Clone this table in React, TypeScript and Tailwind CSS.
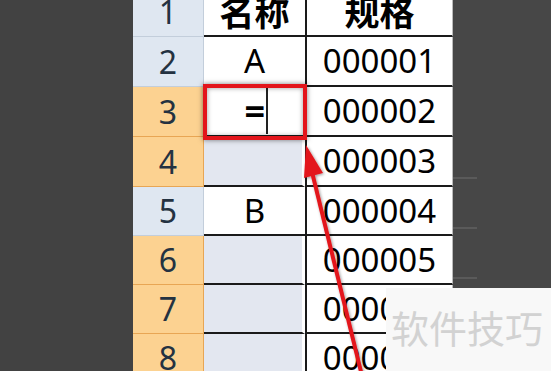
import React from "react";

const num = { fontFamily: '"Noto Sans", "Open Sans", sans-serif' };
const cjk = { fontFamily: '"Noto Sans CJK SC", "Noto Sans", sans-serif' };

type Row = {
  n: string;
  h: string;
  sel: boolean;
  a: string;
  aBg: "white" | "sel";
  b: string;
  head?: boolean;
};

const rows: Row[] = [
  { n: "1", h: "h-[50px]", sel: false, a: "名称", aBg: "white", b: "规格", head: true },
  { n: "2", h: "h-[50px]", sel: false, a: "A", aBg: "white", b: "000001" },
  { n: "3", h: "h-[50px]", sel: true, a: "=", aBg: "white", b: "000002" },
  { n: "4", h: "h-[50px]", sel: true, a: "", aBg: "sel", b: "000003" },
  { n: "5", h: "h-[49px]", sel: false, a: "B", aBg: "white", b: "000004" },
  { n: "6", h: "h-[49px]", sel: true, a: "", aBg: "sel", b: "000005" },
  { n: "7", h: "h-[49px]", sel: true, a: "", aBg: "sel", b: "000006" },
  { n: "8", h: "h-[49px]", sel: true, a: "", aBg: "sel", b: "000007" },
];

export default function App() {
  return (
    <div className="relative w-[551px] h-[371px] overflow-hidden flex bg-[#444444]">
      <div className="w-[133px] shrink-0 bg-[#424242]" />
      <div className="flex flex-col -mt-[13px] shrink-0">
        {rows.map((r) => (
          <div key={r.n} className={`flex ${r.h} shrink-0`}>
            <div
              className={
                r.sel
                  ? "w-[71px] shrink-0 flex items-center justify-center bg-[#fcd291] border-b border-r border-[#e8a654] text-[32px] text-[#243241]"
                  : "w-[71px] shrink-0 flex items-center justify-center bg-[#dfe7f1] border-b border-r border-[#c3cedb] text-[32px] text-[#243241]"
              }
              style={num}
            >
              {r.n}
            </div>
            <div
              className={
                r.aBg === "sel"
                  ? "w-[101px] shrink-0 bg-[#e3e7f0] border-b-2 border-b-[#1a1a1a] border-r-[3px] border-r-white"
                  : "w-[101px] shrink-0 bg-white border-b-2 border-b-[#1a1a1a] flex items-center justify-center text-[33px] text-black"
              }
              style={r.head ? { ...cjk, fontWeight: 700, fontSize: 35 } : num}
            >
              {r.a === "=" ? (
                <div className="flex w-full h-full items-center">
                  <div className="w-[62px] flex justify-end pr-[1px] text-[36px] font-bold leading-none">=</div>
                  <div className="w-[2px] h-[46px] bg-[#222]" />
                </div>
              ) : (
                r.a
              )}
            </div>
            <div
              className="w-[148px] shrink-0 bg-white border-l-2 border-l-[#1a1a1a] border-b-2 border-b-[#1a1a1a] border-r border-r-[#bbbbbb] flex items-center justify-center text-[33px] text-black"
              style={r.head ? { ...cjk, fontWeight: 700, fontSize: 35 } : num}
            >
              {r.b}
            </div>
          </div>
        ))}
      </div>
      <div className="flex-1 bg-[#474747] flex flex-col pt-[177px] gap-[48px]">
        <div className="w-[24px] h-[2px] bg-[#5a5a5a]" />
        <div className="w-[24px] h-[2px] bg-[#5a5a5a]" />
        <div className="w-[24px] h-[2px] bg-[#5a5a5a]" />
      </div>

      {/* active cell red frame */}
      <div className="absolute left-[203px] top-[84px] w-[104px] h-[56px] border-[4px] border-[#e3151b] shadow-[0_0_5px_rgba(0,0,0,0.5),inset_0_0_5px_rgba(0,0,0,0.4)]" />

      {/* watermark panel */}
      <div className="absolute left-[386px] top-[288px] right-0 bottom-0 bg-[#f8f8f8] pl-[5px] pt-[20px]">
        <div className="text-[38px] leading-none text-[#d2d2d2] whitespace-nowrap" style={cjk}>
          软件技巧
        </div>
      </div>

      {/* arrow */}
      <svg className="absolute inset-0" width="551" height="371" viewBox="0 0 551 371">
        <defs>
          <filter id="sh" x="-20%" y="-20%" width="140%" height="140%">
            <feDropShadow dx="1" dy="1" stdDeviation="1.5" floodColor="#000" floodOpacity="0.4" />
          </filter>
        </defs>
        <g filter="url(#sh)">
          <line x1="363" y1="380" x2="312" y2="172" stroke="#e3151b" strokeWidth="4" />
          <polygon points="306,145 304,178 323,173" fill="#e3151b" />
        </g>
      </svg>
    </div>
  );
}
